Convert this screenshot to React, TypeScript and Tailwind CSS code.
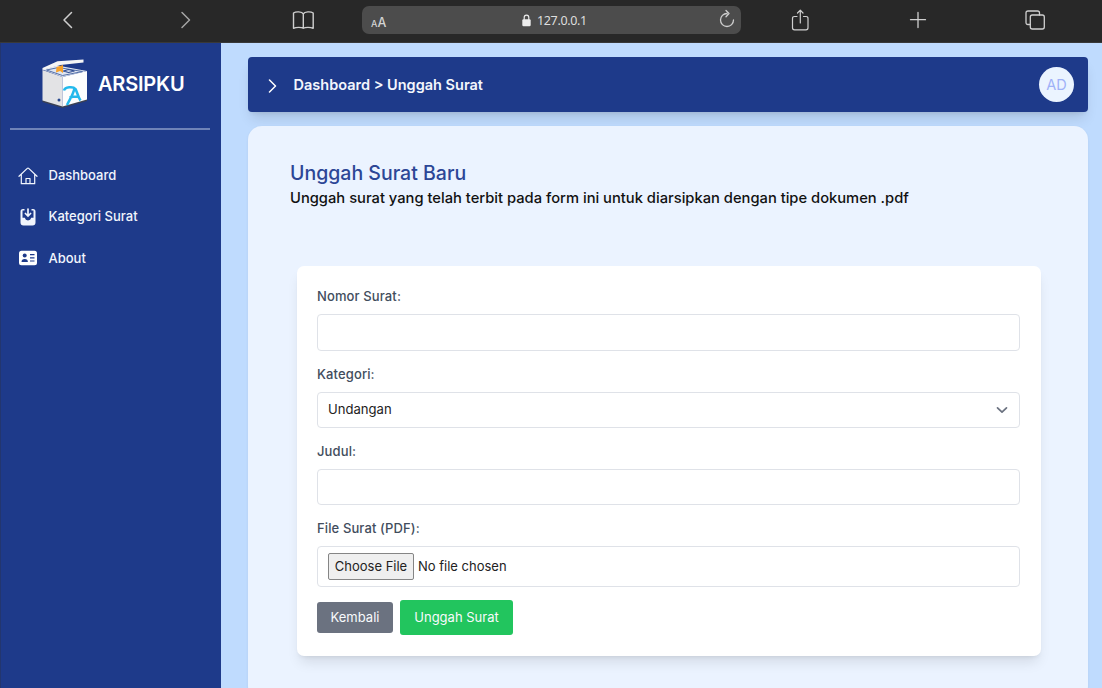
import React from "react";

const stroke = {
  fill: "none",
  stroke: "currentColor",
  strokeLinecap: "round" as const,
  strokeLinejoin: "round" as const,
};

function Logo() {
  return (
    <svg className="-ml-px block h-[50px] w-[49px]" viewBox="0 0 48 50">
      <path d="M2 41 22 47 46.500 40v2L22 49 2 43z" fill="#3c4152" />
      <path d="M2 11 22 18v29.500L2 41.500z" fill="#e3e3e5" />
      <path d="M22 18 46.500 12v28.500L22 47.500z" fill="#fdfdfd" />
      <path d="M2 10.500 17 6.500l29.500 5.500L22 18z" fill="#dfe5f1" />
      <path d="M6 11 18 8.500 42 12.500 22 16.500z" fill="none" stroke="#5470a8" strokeWidth="1" />
      <path d="m23 12 5-1.500 6 1.500-6 1.500z" fill="none" stroke="#2c4a91" strokeWidth="1.200" />
      <path d="M2 9 17 2.200 43 .500v3L20 6 2 11z" fill="#f5f5f6" />
      <path d="M16 8 22.500 6v8l-3-2-4 1.500z" fill="#f7a129" />
      <circle cx="18.500" cy="41" r="1.500" fill="#29498f" />
      <path d="M23.500 31.500c1-3.500 9-4.500 11.500-1.500 1.500 2.500 2.500 8 5 11.500M34 29c-1 6-4 10-7.500 17M29 38.500c3-1 6-1 8.500-1" fill="none" stroke="#23b9ec" strokeWidth="2.500" strokeLinejoin="round" />
    </svg>
  );
}

function Toolbar() {
  return (
    <header className="relative h-[43px] w-full shrink-0 border-b border-[#393939] bg-[#282828] text-[#cfcfcf]">
      <svg className="absolute left-[62px] top-[11px] h-[18px] w-[12px]" viewBox="0 0 12 18" {...stroke} strokeWidth="1.500"><path d="M9.500 1.500 2 9l7.500 7.500" /></svg>
      <svg className="absolute left-[180px] top-[11px] h-[18px] w-[12px] text-[#a5a5a5]" viewBox="0 0 12 18" {...stroke} strokeWidth="1.500"><path d="M2 1.500 9.500 9 2 16.500" /></svg>
      <svg className="absolute left-[292px] top-[10px] h-[20px] w-[23px]" viewBox="0 0 23 20" {...stroke} strokeWidth="1.400">
        <path d="M11.300 3.800C10 1.500 4 1.200 1.500 3v15.300c2.500-1.300 8-1.300 9.800 0 1.800-1.300 7.300-1.300 9.900 0V3C18.700 1.200 12.600 1.500 11.300 3.800zm0 0v14.500" />
      </svg>
      <div className="absolute left-[362px] top-[6px] flex h-[28px] w-[379px] items-center justify-center rounded-[7px] bg-[#4c4c4c]">
        <span className="absolute left-[9px] top-[9px] flex items-baseline font-['Inter',sans-serif] font-medium leading-[16px] text-[#d4d4d4]">
          <span className="text-[9px]">A</span>
          <span className="text-[12.500px]">A</span>
        </span>
        <svg className="absolute left-[160px] top-[8px] h-[13px] w-[9px] text-[#ececec]" viewBox="0 0 9 13">
          <rect x=".300" y="5.300" width="8.400" height="7" rx="1.200" fill="currentColor" />
          <path d="M2.200 6V3.500C2.200.400 6.800.400 6.800 3.500V6" fill="none" stroke="currentColor" strokeWidth="1.200" />
        </svg>
        <span className="absolute left-[175px] top-[7px] font-['Noto_Sans',sans-serif] text-[12.500px] leading-[16px] tracking-[-0.350px] text-[#dedede]">127.0.0.1</span>
        <svg className="absolute left-[357px] top-[3px] h-[19px] w-[16px]" viewBox="0 0 16 19" {...stroke} strokeWidth="1.300">
          <path d="M8 4.500a6.500 6.500 0 1 0 6.500 6.500M7 1.500l3 3-3 3.200" />
        </svg>
      </div>
      <svg className="absolute left-[791px] top-[9px] h-[23px] w-[19px]" viewBox="0 0 19 23" {...stroke} strokeWidth="1.200">
        <path d="M6 7.500H3.500Q1.500 7.500 1.500 9.500v9.300q0 2 2 2H15q2 0 2-2V9.500q0-2-2-2h-2.500M9.300 14V1.500M6.500 4l2.800-2.800L12 4" />
      </svg>
      <svg className="absolute left-[909px] top-[11px] h-[18px] w-[18px]" viewBox="0 0 18 18" {...stroke} strokeWidth="1.300"><path d="M9 1.500v15M1.500 8.700h15" /></svg>
      <svg className="absolute left-[1025px] top-[10px] h-[20px] w-[21px]" viewBox="0 0 21 20" {...stroke} strokeWidth="1.300">
        <rect x="5.300" y="5" width="14" height="14" rx="2" />
        <path d="M5.200 14.500H3q-2 0-2-2V3q0-2 2-2h9.500q2 0 2 2v2" />
      </svg>
    </header>
  );
}

function HomeIcon() {
  return (
    <svg className="h-[18px] w-[20px]" viewBox="0 0 20 18" {...stroke} strokeWidth="1.200">
      <path d="M1 9.300 9.300 1.400q.700-.600 1.400 0L19 9.300M3.300 7.500v9.200h13.400V7.500M8 16.500v-5h4v5" />
    </svg>
  );
}

function InboxIcon() {
  return (
    <svg className="h-[18px] w-[20px]" viewBox="0 0 20 18" fill="currentColor">
      <path d="M6.500 1v1.600H4.500v7.200h2.300q.600 2.600 3.200 2.600t3.200-2.600h2.300V2.600h-2V1H15q2.500 0 2.500 2.500v11q0 3-3 3h-9q-3 0-3-3v-11Q2.500 1 5 1z" />
      <path d="M10 1v6.500M7.400 5.500 10 8l2.600-2.500" fill="none" stroke="currentColor" strokeWidth="1.700" strokeLinecap="round" />
    </svg>
  );
}

function CardIcon() {
  return (
    <svg className="h-[16px] w-[20px]" viewBox="0 0 20 16">
      <rect x="1" y=".700" width="18" height="14.600" rx="2.500" fill="#fff" />
      <g fill="#1e3a8a">
        <circle cx="6.700" cy="5.400" r="2" />
        <path d="M3.500 11.900q0-3 3.200-3t3.200 3z" />
        <path d="M12 4h4.500v1.200H12zM12 7.200h4.500v1.200H12zM12 10.400h4.500v1.200H12z" />
      </g>
    </svg>
  );
}

const nav = [
  { label: "Dashboard", icon: <HomeIcon /> },
  { label: "Kategori Surat", icon: <InboxIcon /> },
  { label: "About", icon: <CardIcon /> },
];

function Sidebar() {
  return (
    <aside className="h-full w-[221px] shrink-0 border-l border-[#23366f] bg-[#1e3a8a] text-white">
      <div className="flex h-[85px] items-start pl-[40px] pt-[16px]">
        <Logo />
        <span className="ml-[9px] mt-[11px] text-[20px] font-semibold leading-[28px] tracking-[-0.200px]">ARSIPKU</span>
      </div>
      <hr className="ml-[9px] w-[200px] border-t-[2px] border-[#6f83b8]" />
      <nav className="mt-[25px] flex flex-col">
        {nav.map((n) => (
          <a key={n.label} className="flex h-[41.400px] items-center pl-[17px] text-[#f1f5fd]">
            {n.icon}
            <span className="ml-[10.500px] text-[13px] font-medium">{n.label}</span>
          </a>
        ))}
      </nav>
    </aside>
  );
}

function Label({ children }: { children: React.ReactNode }) {
  return <label className="block h-[18px] text-[13px] font-medium leading-[18px] tracking-[0.120px] text-[#424d5d]">{children}</label>;
}

const box = "mt-[9px] flex w-full items-center rounded-[4px] border border-[#dfe2e8] bg-white px-[10px] text-[13.100px] text-[#222]";

export default function App() {
  return (
    <div className="flex h-[688px] w-[1102px] flex-col overflow-hidden bg-[#bfdbfe] font-['Inter',sans-serif]">
      <Toolbar />
      <div className="flex min-h-0 flex-1">
        <Sidebar />
        <main className="flex min-w-0 flex-1 flex-col overflow-hidden pl-[27px] pr-[14px] pt-[14px]">
          <div className="flex h-[55px] shrink-0 items-center rounded-[4px] bg-[#1e3a8a] pl-[20px] pr-[14px] text-white shadow-[0_9px_13px_-3px_rgb(0_0_0/0.12),0_3px_5px_-3px_rgb(0_0_0/0.12)]">
            <svg className="mt-[2px] h-[14px] w-[9px]" viewBox="0 0 9 14" {...stroke} strokeWidth="1.500"><path d="m1.500 1 6 6-6 6" /></svg>
            <span className="ml-[16.500px] mt-[1px] text-[14.500px] font-semibold leading-[20px] text-[#f3f6fd]">Dashboard &gt; Unggah Surat</span>
            <div className="ml-auto flex h-[35px] w-[35px] items-center justify-center rounded-full bg-[#ebf4ff] text-[14.500px] text-[#9fb1f8]">AD</div>
          </div>
          <section className="mt-[14px] h-[574px] shrink-0 rounded-[14px] bg-[#ebf3ff] px-[42px] pt-[35px] shadow-[0_1px_3px_rgb(0_0_0/0.06)]">
            <h1 className="h-[25px] text-[19.500px] font-medium leading-[25px] text-[#2c4696]">Unggah Surat Baru</h1>
            <p className="mt-[2px] text-[14.720px] font-medium leading-[21px] text-[#111]">Unggah surat yang telah terbit pada form ini untuk diarsipkan dengan tipe dokumen .pdf</p>
            <form className="ml-[7px] mt-[57px] h-[390px] w-[744px] rounded-[7px] bg-white pl-[20px] pr-[21px] pt-[21px] shadow-[0_9px_13px_-3px_rgb(0_0_0/0.1),0_3px_5px_-3px_rgb(0_0_0/0.1)]">
              <Label>Nomor Surat:</Label>
              <div className={`${box} h-[37px]`} />
              <div className="mt-[14px]"><Label>Kategori:</Label></div>
              <div className={`${box} h-[36px]`}>
                <span>Undangan</span>
                <svg className="ml-auto mr-[1px] h-[8px] w-[12px] text-[#6b7280]" viewBox="0 0 12 8" {...stroke} strokeWidth="1.700"><path d="m1.500 1.800 4.500 4.400 4.500-4.400" /></svg>
              </div>
              <div className="mt-[14px]"><Label>Judul:</Label></div>
              <div className={`${box} h-[36px]`} />
              <div className="mt-[14px]"><Label>File Surat (PDF):</Label></div>
              <div className={`${box} h-[41px]`}>
                <button type="button" className="flex h-[27px] w-[86px] items-center justify-center whitespace-nowrap rounded-[2px] border border-[#858585] bg-[#efefef] text-[13px]">Choose File</button>
                <span className="ml-[4px] text-[13px]">No file chosen</span>
              </div>
              <div className="mt-[13px] flex items-center gap-[7px] text-[#f8fafc]">
                <button type="button" className="flex h-[31px] w-[76px] items-center justify-center rounded-[3px] bg-[#6b7280] text-[13px]">Kembali</button>
                <button type="button" className="flex h-[35px] w-[113px] items-center justify-center rounded-[3px] bg-[#22c55e] text-[13px]">Unggah Surat</button>
              </div>
            </form>
          </section>
        </main>
      </div>
    </div>
  );
}
